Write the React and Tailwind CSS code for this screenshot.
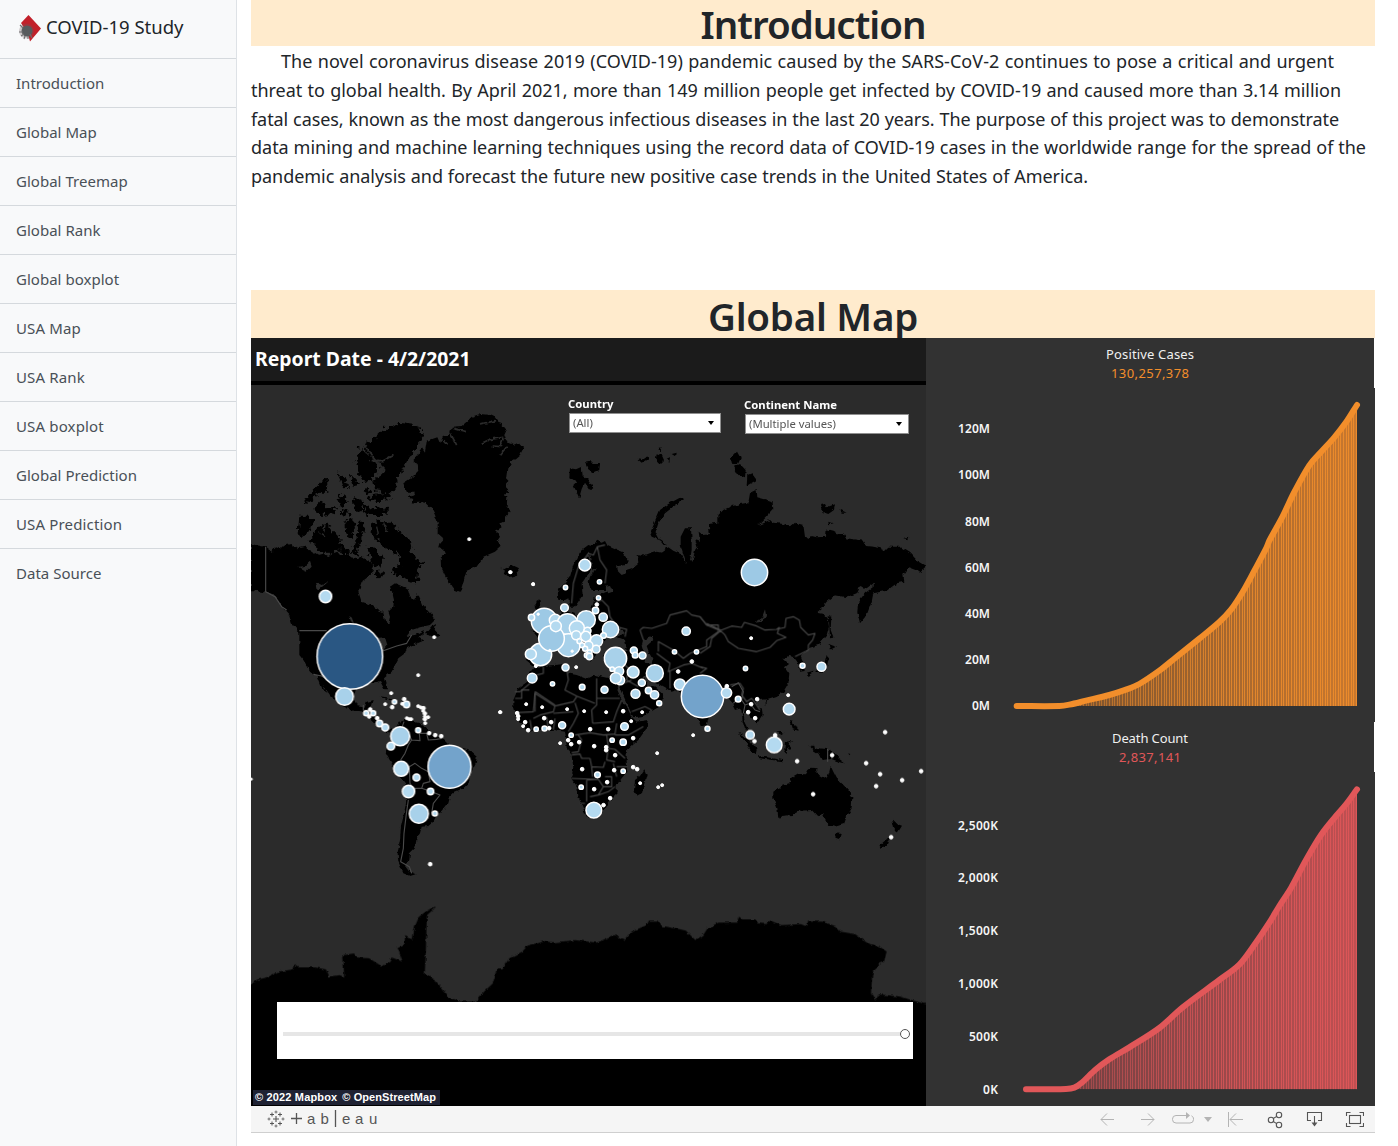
import React from "react";

const NAV = [
  "Introduction",
  "Global Map",
  "Global Treemap",
  "Global Rank",
  "Global boxplot",
  "USA Map",
  "USA Rank",
  "USA boxplot",
  "Global Prediction",
  "USA Prediction",
  "Data Source",
];

function Logo() {
  return (
    <svg className="h-7 w-6 shrink-0" viewBox="0 0 24 28">
      <path d="M10.500 1 L23 14.500 L12 27.500 L10 20 L3 9 Z" fill="#c2202a" />
      <circle cx="8.500" cy="17" r="7.500" fill="#6b5b5c" fillOpacity="0.3" />
      <circle cx="9" cy="17" r="5.500" fill="#575b5d" />
      <path
        d="M2 11l3 3M1 18h4M3 22l3-2M6 25l1-3M10 25v-3M14 24l-2-4"
        stroke="#6f6f70"
        strokeWidth="1.1"
        fill="none"
      />
    </svg>
  );
}

function Sidebar() {
  return (
    <aside className="flex w-[237px] shrink-0 flex-col border-r border-[#dee2e6] bg-[#f8f9fa]">
      <div className="flex h-[59px] items-center border-b border-[#d5d9dd] pb-[3px] pl-[18px]">
        <Logo />
        <span className="mb-px ml-1 text-[18.5px] whitespace-nowrap text-[#212529]">COVID-19 Study</span>
      </div>
      {NAV.map((label, i) => (
        <a
          key={label}
          className={
            "flex h-[49px] items-center pl-4 text-[15px] whitespace-nowrap text-[#495057] " +
            (i < NAV.length - 1 ? "border-b border-[#d5d9dd] " : "") +
            (label.startsWith("USA") ? "tracking-[0.15px]" : "tracking-[0.02px]")
          }
        >
          {label}
        </a>
      ))}
    </aside>
  );
}

/* ---------- map ---------- */

const AMERICAS = [
  // mainland North America down to Panama
  "3,432 20,436 45,440 65,455 78,442 90,446 100,437 125,432 128,440 140,437 143,445 165,440 175,450 190,455 205,465 220,461 235,468 250,460 262,455 270,465 290,465 305,472 320,475 335,470 350,480 368,492 362,505 372,515 355,530 335,545 325,575 335,605 365,615 385,630 400,636 405,665 415,672 420,650 415,635 430,620 432,600 426,575 420,560 435,550 460,560 475,570 480,588 492,600 503,580 515,605 520,618 545,645 555,660 540,675 510,682 485,690 470,708 495,705 525,690 520,702 505,712 520,722 490,735 470,745 465,760 445,775 435,795 425,815 402,835 411,868 403,868 390,843 360,850 320,860 310,895 320,915 345,920 350,905 368,900 362,920 352,932 368,932 375,955 385,970 400,982 415,990 425,985 440,990 436,1000 405,995 380,975 360,955 340,938 310,933 270,915 240,885 215,850 200,830 180,812 160,780 148,765 148,700 125,670 118,645 95,620 85,600 70,585 50,578 3,570",
  "198,825 212,838 222,865 233,882 222,875 212,862",
  // South America
  "440,982 455,960 470,955 490,965 510,970 525,982 545,1000 575,1010 590,1025 600,1035 630,1045 660,1052 680,1070 678,1090 665,1115 655,1150 640,1165 615,1175 600,1190 595,1210 575,1235 560,1245 550,1265 535,1278 515,1280 510,1300 500,1315 495,1345 480,1360 478,1380 465,1395 480,1415 497,1423 480,1428 460,1420 445,1385 443,1360 450,1320 453,1280 460,1250 468,1210 470,1170 465,1150 440,1120 425,1090 407,1060 410,1045 425,1020 440,1010",
  "528,702 548,678 558,672 554,690 572,708 548,712",
  "388,889 410,892 425,898 442,910 425,902",
  "750,500 762,508 785,496 803,504 806,514 795,527 778,532 758,520 765,512",
];
const ARCTIC = [
  "430,75 440,68 460,70 475,72 500,75 508,88 525,105 505,130 490,160 470,185 455,215 440,235 445,255 425,280 400,275 375,270 370,240 400,215 390,185 365,175 345,150 350,130 385,105 410,80",
  "330,145 350,160 375,190 380,215 360,245 340,240 325,215 317,190",
  "350,295 370,285 420,275 418,300 370,305",
  "340,315 370,325 410,320 410,345 350,345",
  "160,310 185,275 215,245 238,238 225,265 195,290 180,312",
  "190,325 215,300 225,320 245,325 262,320 250,340 215,345",
  "262,220 285,235 300,260 280,262",
  "298,225 322,250 310,265",
  "215,262 232,262 232,275 216,275",
  "262,295 285,280 290,310 270,315",
  "310,288 335,300 340,335 315,328",
  "270,330 300,335 295,345 270,342",
  "345,265 362,275 348,282",
  "148,350 180,350 195,365 175,395 160,412 143,400",
  "175,420 205,380 225,368 245,385 240,400 262,400 275,430 288,448 260,450 240,460 205,455 190,430",
  "283,365 312,358 315,390 300,412 285,395",
  "325,365 345,365 340,395 330,430 320,470 305,460 318,430",
  "365,370 390,362 430,370 445,390 480,420 485,450 500,480 520,490 505,510 500,550 475,545 450,525 425,518 430,505 455,495 440,465 415,445 385,430 375,410 360,395",
  "352,440 380,445 402,480 390,505 365,490",
  "380,510 405,525 385,535 370,525",
  "275,445 300,450 290,465 272,455",
];
const GREENLAND =
  "690,42 720,45 735,52 745,68 755,72 770,90 763,105 768,120 790,135 805,128 820,145 810,165 795,178 780,185 785,195 772,205 768,235 778,245 765,262 778,275 760,285 772,292 770,320 782,332 765,350 765,365 748,370 755,382 738,392 750,410 740,425 755,437 735,455 700,470 680,500 650,512 640,545 630,578 615,572 605,560 585,525 573,500 572,470 585,460 580,448 565,440 570,425 580,415 563,400 563,370 555,345 545,325 530,310 505,305 485,308 490,298 470,292 495,285 492,275 470,275 460,250 490,230 505,215 500,190 490,180 505,165 515,140 525,155 530,125 545,118 562,112 570,130 578,112 600,100 605,80 635,78 650,65 665,50";

const EURASIA = [
  "145,180 143,150 165,130 180,110 190,75 205,45 215,30 235,15 245,18 262,2 275,8 285,3 293,18 315,28 335,35 356,62 352,74 325,78 318,72 320,90 335,105 348,100 348,90 365,85 385,68 380,45 395,48 420,38 440,32 455,35 475,22 490,32 512,42 528,70 512,15 512,-10 525,-35 543,-35 545,0 545,30 540,60 548,65 555,30 562,20 556,0 570,5 566,-25 580,-15 600,-18 595,-48 625,-52 625,-75 640,-90 660,-100 690,-108 715,-112 720,-140 740,-150 742,-128 765,-122 788,-115 790,-92 770,-70 745,-45 780,-60 790,-52 820,-48 840,-38 855,-52 880,-45 885,-10 895,0 905,-12 920,-8 948,-10 950,-32 968,-28 980,-20 1000,-20 1010,-5 1030,-2 1060,2 1068,18 1090,20 1115,25 1120,35 1135,20 1170,20 1200,38 1220,60 1245,75 1235,102 1222,92 1195,82 1180,105 1183,125 1160,130 1130,152 1090,160 1085,185 1070,225 1050,250 1042,215 1045,185 1065,160 1090,140 1092,128 1070,145 1050,138 1040,160 1010,172 975,166 950,185 935,205 920,218 940,222 953,235 957,260 950,285 925,315 895,325 870,345 880,370 882,385 872,388 862,365 850,350 835,348 815,358 840,370 825,382 838,400 835,430 820,455 800,468 770,478 750,480 735,490 755,505 758,525 740,552 728,535 712,515 700,520 705,550 715,570 705,568 698,545 694,505 675,510 660,480 640,465 600,520 590,555 578,558 568,535 520,480 508,448 485,455 460,440 440,430 420,405 400,410 412,435 440,445 460,465 455,485 440,505 400,528 370,532 355,500 335,455 325,430 335,400 330,380 290,375 275,350 290,335 330,330 350,330 320,290 345,280 330,262 300,290 275,310 265,335 245,362 230,350 210,320 185,310 200,345 180,352 160,310 125,320 125,350 95,375 70,378 48,360 50,330 85,325 90,300 65,270 100,262 130,245 150,225 155,195 165,190 175,215 200,225 240,215 250,190 255,170 290,155 300,150 245,150 235,130 240,110 258,85 240,95 215,130 218,165 195,200 180,200 175,175 165,180",
  "75,185 88,178 92,205 112,235 105,262 70,262 82,225",
];
// islands of the Arctic Ocean
const ISLES = [
  "180,235 198,238 215,230 218,258 232,268 250,295 240,300 225,278 215,300 208,325 190,285 200,275 178,262",
  "225,215 240,212 248,222 270,222 268,240 250,248 235,238",
  "515,320 522,328 490,350 465,370 445,400 437,425 450,450 425,440 420,430 435,395 450,360 475,342",
  "447,448 462,458 470,468 460,464",
  "660,205 680,183 692,205 685,220 662,218",
  "672,230 690,222 707,240 705,262 685,255",
  "712,255 725,250 740,270 710,287",
  "930,345 945,342 950,352 975,343 972,360 955,372 938,366",
  "988,358 1010,368 995,368",
  "955,395 968,400 956,403",
  "1180,445 1198,440 1195,448",
  "383,205 398,208 412,196 415,208 398,218",
  "440,190 455,195 462,210 450,222 438,208",
  "468,205 480,202 478,216",
  "485,192 500,188 498,200",
  "445,178 455,175 452,184",
];
const AFRICA = [
  "70,60 85,25 112,5 120,-20 135,-38 160,-42 225,-48 235,-45 232,-20 260,-15 290,-3 315,-15 360,-5 385,5 380,25 395,60 415,90 425,110 440,125 473,120 470,145 445,180 410,212 410,240 412,275 395,295 380,315 380,340 360,360 345,385 325,405 290,410 275,375 265,350 262,320 243,295 250,265 245,225 230,205 228,175 225,155 195,150 150,150 115,155 90,130 75,105 70,85",
  "435,300 450,288 463,268 470,285 455,340 440,347 432,330",
  "622,112 645,112 645,130 632,138",
];
const OCEANIA = [
  "250,335 275,318 300,310 305,292 325,280 345,283 352,270 362,263 383,265 378,280 410,298 418,275 422,258 430,275 440,295 455,310 475,330 487,350 485,385 470,410 462,432 435,440 415,435 403,412 398,400 385,412 365,390 330,392 305,405 275,408 265,414 262,385 250,355",
  "437,460 455,462 450,478 440,475",
  "606,416 622,432 636,437 622,460 612,445",
  "602,465 590,495 575,503 568,497 590,478",
  "358,197 370,197 372,208 385,205 410,207 435,220 445,235 467,251 440,243 425,237 395,240 385,220 370,210",
  "145,158 165,170 190,195 203,210 200,223 185,215 165,185",
  "205,228 240,233 282,241 278,244 240,239 205,234",
  "258,155 272,152 283,158 275,165",
  "285,185 310,184 296,192 302,210 296,208 292,200 290,220 283,210",
  "300,120 308,122 310,135 322,140 322,152 308,148",
  "225,60 232,62 228,76",
  "475,220 481,222 478,226",
];
const JAPAN = [
  "386,228 394,232 392,270 400,290 390,292",
  "386,312 408,320 390,330",
  "380,345 386,358 380,385 365,398 345,398 350,388 372,378",
  "320,398 340,392 338,400 322,408",
  "295,362 312,372 314,390 300,392",
];
const ANTARCTICA =
  "2,370 20,358 40,352 65,335 100,328 103,312 112,322 150,322 175,328 182,350 205,345 217,350 215,285 240,280 245,292 275,295 305,320 322,305 326,292 352,305 340,262 356,250 358,225 375,238 380,200 390,170 410,150 428,142 408,165 405,290 403,342 430,365 460,412 485,425 520,425 540,395 560,370 570,325 582,325 598,295 628,275 640,257 680,243 700,247 750,240 800,248 822,235 840,225 862,240 880,215 915,195 920,182 942,182 950,198 985,206 1005,212 1027,240 1045,225 1055,205 1080,188 1122,188 1128,170 1135,178 1165,178 1172,190 1190,192 1200,182 1225,195 1270,192 1282,198 1285,185 1320,185 1350,198 1362,215 1395,222 1430,252 1450,258 1468,275 1462,305 1448,312 1435,345 1432,400 1442,422 1450,403 1500,410 1520,418 1558,432 1570,434 1570,570 -10,570 -10,372";

// [x, y, r] on the sheet of each region
const DOTS_W = [
  [226, 589, 19], [299, 769, 99], [657, 417, 5], [780, 516, 5], [849, 552, 5], [552, 711, 5],
  [283, 889, 27], [504, 825, 5], [423, 879, 5], [405, 912, 5], [433, 905, 7], [426, 921, 6], [462, 897, 6], [456, 911, 5], [469, 913, 10],
  [348, 939, 8], [360, 928, 6], [369, 939, 8], [357, 949, 6], [381, 954, 6], [388, 970, 10], [405, 982, 11],
  [504, 918, 5], [512, 922, 5], [520, 924, 6], [519, 932, 5], [524, 940, 6], [524, 949, 5], [534, 951, 5], [524, 957, 6], [525, 969, 5],
  [470, 954, 5], [477, 957, 5], [483, 957, 5], [504, 990, 8], [537, 999, 6], [555, 1005, 6], [573, 1008, 6],
  [450, 1008, 29], [422, 1038, 12], [598, 1100, 65], [453, 1106, 23], [499, 1132, 11], [475, 1174, 19], [541, 1174, 10], [506, 1241, 29], [554, 1240, 8], [540, 1392, 6], [750, 936, 5], [3, 1137, 4],
];
const DOTS_E = [
  [224, 75, 18], [166, 142, 7], [268, 125, 7], [69, 132, 5], [1, 96, 5], [733, 97, 40],
  [102, 243, 39], [64, 232, 10], [84, 222, 4], [163, 203, 12], [265, 173, 7], [260, 193, 6], [256, 211, 10], [279, 231, 13], [135, 240, 18],
  [228, 239, 28], [172, 252, 32], [175, 315, 35], [91, 343, 34], [124, 295, 39], [137, 258, 17], [200, 264, 23], [62, 342, 17], [119, 331, 4], [186, 333, 4],
  [232, 272, 11], [198, 285, 14], [227, 289, 16], [208, 303, 8], [301, 268, 25], [280, 286, 9], [259, 302, 19], [235, 317, 14], [216, 315, 8], [225, 326, 8], [258, 327, 12], [238, 337, 8], [230, 345, 8], [238, 349, 10],
  [77, 378, 5], [166, 382, 11], [198, 381, 5], [66, 414, 15], [127, 431, 7], [216, 441, 9], [283, 449, 11],
  [316, 355, 34], [306, 387, 7], [327, 393, 14], [371, 331, 11], [375, 345, 9], [397, 346, 11], [330, 420, 14], [317, 414, 17], [369, 396, 18], [434, 399, 26], [395, 428, 11], [415, 451, 10], [433, 464, 13], [376, 461, 14], [447, 489, 8],
  [528, 273, 13], [493, 335, 7], [559, 335, 7], [545, 364, 6], [504, 394, 6], [509, 433, 17], [577, 469, 64], [723, 294, 5], [706, 385, 7],
  [650, 438, 6], [649, 458, 16], [684, 477, 9], [741, 477, 6], [723, 492, 6], [714, 516, 6], [735, 534, 6], [834, 465, 5], [837, 507, 18], [877, 377, 8], [934, 380, 14],
];
const DOTS_S = [
  [30, 96, 5], [108, 72, 5], [156, 81, 5], [231, 87, 5], [282, 93, 5], [348, 96, 5], [399, 93, 6], [456, 96, 5], [423, 123, 5],
  [81, 99, 6], [84, 108, 6], [84, 117, 5], [105, 126, 6], [99, 138, 5], [114, 150, 6], [138, 147, 7], [162, 114, 6], [163, 145, 8], [177, 144, 6], [183, 126, 6],
  [216, 135, 11], [300, 147, 6], [354, 147, 6], [403, 139, 12], [429, 174, 6], [399, 186, 10], [366, 180, 7], [348, 201, 6], [348, 210, 6], [375, 225, 6],
  [243, 165, 7], [234, 180, 6], [243, 192, 6], [210, 189, 5], [267, 186, 6], [312, 198, 6], [276, 267, 6], [322, 284, 9], [372, 270, 6], [399, 273, 7], [429, 261, 6], [441, 267, 6],
  [351, 306, 6], [273, 321, 7], [312, 327, 6], [360, 354, 6], [340, 375, 6], [311, 390, 24], [450, 309, 5], [501, 219, 5], [504, 321, 5], [516, 315, 5], [609, 165, 5], [652, 146, 8],
];
const DOTS_O = [
  [180, 164, 13], [193, 183, 6], [255, 165, 6], [252, 194, 24], [321, 243, 6], [426, 225, 6], [369, 342, 6], [585, 156, 6], [528, 249, 6],
  [570, 282, 6], [558, 318, 6], [636, 300, 6], [693, 273, 6], [603, 471, 6],
];

function shade(r) {
  if (r > 90) return "#2a5783";
  if (r > 60) return "#73a3cb";
  if (r > 37) return "#9dc9e5";
  if (r > 24) return "#a8d1ea";
  return r < 7 ? "#ffffff" : "#b4daf0";
}

function Dots({ items }) {
  return items.map(([x, y, r], i) => (
    <circle key={i} cx={x + 0.5} cy={y + 0.5} r={r - 0.5} fill={shade(r)} stroke="#fff" strokeWidth={r < 7 ? 3 : 4.5} />
  ));
}
function Land({ shapes }) {
  return shapes.map((p, i) => <polygon key={i} points={p} fill="#000" />);
}
function Borders({ d }) {
  return <path d={d} fill="none" stroke="#4a4a4a" strokeWidth="3.4" strokeLinejoin="round" />;
}
function Water({ d, w = 0 }) {
  return <path d={d} fill={w ? "none" : "#2b2b2b"} stroke={w ? "#2b2b2b" : "none"} strokeWidth={w} />;
}

const WEST = "translate(250 400) scale(0.33333)";
const EAST = "translate(510 540) scale(0.33333)";
const NORTH = "translate(510 390) scale(0.33333)";
const SOUTH = "translate(490 680) scale(0.33333)";
const OCEAN = "translate(690 680) scale(0.33333)";
const FAREAST = "translate(700 540) scale(0.33333)";

function WorldMap() {
  return (
    <svg className="block h-[721px] w-[675px] bg-[#2b2b2b]" viewBox="251 385 675 721">
      <defs>
        <filter id="coast" x="-2%" y="-2%" width="104%" height="104%" colorInterpolationFilters="sRGB">
          <feTurbulence type="fractalNoise" baseFrequency="0.2" numOctaves="2" seed="4" />
          <feDisplacementMap in="SourceGraphic" scale="4" xChannelSelector="R" yChannelSelector="G" />
        </filter>
        <filter id="fjord" x="-2%" y="-2%" width="104%" height="104%" colorInterpolationFilters="sRGB">
          <feTurbulence type="fractalNoise" baseFrequency="0.22" numOctaves="2" seed="9" />
          <feDisplacementMap in="SourceGraphic" scale="10" xChannelSelector="R" yChannelSelector="G" />
        </filter>
      </defs>
      <g filter="url(#fjord)">
        <g transform={WEST}><Land shapes={ARCTIC} /></g>
      </g>
      <g filter="url(#coast)">
        <g transform={WEST}>
          <Land shapes={AMERICAS} />
          <Land shapes={[GREENLAND]} />
          <Water w={5} d="M365,182 L400,182 430,165M385,190 L405,210M340,130 L375,180M610,85 L648,95M600,98 L620,135M695,130 L720,118 760,112M760,115 L750,140 728,138M770,140 L750,165M690,72 L735,62M580,120 L590,130" />
          <Water w={4} d="M440,455 L452,475 M205,395 L225,410 M225,375 L220,400 M380,380 L385,405 M400,365 L410,395" />
          <Water d="M145,500 L165,498 180,485 185,500 170,515 158,510Z M195,545 L215,555 238,545 215,565 200,570Z M298,645 L306,650 312,672 302,662Z M370,715 L405,712 412,735 400,750 390,730Z" />
        </g>
        <g transform={NORTH}><Land shapes={ISLES} /></g>
        <g transform={EAST}>
          <Land shapes={EURASIA} />
          <Water d="M400,300 L425,290 430,300 410,318 418,340 428,358 425,372 408,368 402,345 395,320Z M290,290 L320,290 345,300 350,325 300,335 280,330Z M735,248 L755,235 765,208 768,225 755,245Z M285,140 L300,138 308,155 295,160Z" />
          <Water w={4} d="M215,75 L235,40 250,100" />
        </g>
        <g transform={SOUTH}><Land shapes={AFRICA} /></g>
        <g transform={OCEAN}><Land shapes={OCEANIA} /></g>
        <g transform={FAREAST}><Land shapes={JAPAN} /></g>
        <g transform="translate(250 860) scale(0.43367 0.33333)"><Land shapes={[ANTARCTICA]} /></g>
      </g>
      <rect x="251" y="1005" width="675" height="101" fill="#000" />
      <g transform={WEST}>
        <Borders d="M47,440V575L75,590 95,620 110,630 M148,692H230 M400,752L440,738 470,730 485,705 M190,823L215,828 250,850 M340,915V930L360,932" />
        <Borders d="M462,965L455,985 475,1000 485,1020 475,1035 465,1060 452,1080 M485,1020L510,1022 508,1000 530,1000 M530,1000L535,1020 560,1018 575,1015 M478,1100L495,1090 515,1105 535,1115 540,1145 520,1150 515,1165 545,1175 570,1185 550,1210 545,1240 M478,1100L480,1150 490,1165 515,1165 M475,1200L468,1250 462,1300 460,1345 452,1385 478,1400 485,1420" />
      </g>
      <g transform={EAST}>
        <Borders d="M185,190L190,130 205,80 235,40 250,45 262,20 285,15 M262,20L270,60 290,90 285,130 M258,185L275,180 295,200 300,230 320,260 350,268 345,290" />
        <Borders d="M390,270L400,262 425,265 470,250 480,225 530,212 545,225 570,230 590,255 625,255 625,275 590,300 590,320 540,340 520,355 490,330 445,305 445,335M390,270L400,300M440,340L480,370 475,395 520,375 545,370 580,385M480,395V445M340,370L355,385 350,420 385,440M340,430L365,420M365,515L405,500 425,510" />
        <Borders d="M570,230L590,255 630,272 665,258 695,262 703,247 740,258 765,270 800,268 808,262 802,280 828,292 800,302 780,322 740,335 685,325 655,305 645,285 632,272 605,295 600,320 570,340 M800,268L825,262 828,235 850,230 868,240 872,262 895,285 915,280 908,300 895,315 895,330 855,350 M632,270L590,250 M570,380L590,385 570,400 M660,435L690,430 700,445 695,465 710,485 725,475 740,495 750,510" />
        <Borders d="M80,405L100,400 100,380M15,455H30L60,430M75,455V515M75,455L135,495 M170,385L175,420 165,450 200,468 255,490 M260,415V475H330 M200,470L190,485 135,498" />
      </g>
      <g transform={SOUTH}>
        <Borders d="M75,55H95V30H118 M135,40L130,95 75,98 M135,40L195,78 190,95 150,105 130,115 M255,68L265,100 250,130 M320,55V75L305,90 308,130 M190,100L250,95 M395,60L380,95 370,125 308,130 M170,110L175,150 M120,120L125,150 M195,115L190,150 M250,130L235,155 M255,165L300,158 340,165 375,162 380,130 M265,165L275,180 265,215 245,218 M350,165L355,200 350,240 375,245 M300,235L305,260 340,262 345,245 M245,225L270,222 275,235 300,235 M243,295L320,298 M375,165L415,165 460,140 M355,205L375,208 405,235 M380,260H412 M370,250L380,290 M305,262L308,290 M290,300V365 M290,300L325,298 340,320 365,320 365,290 345,290 M340,320L325,345 300,350 M325,345L355,335 375,320 M270,370H285" />
      </g>
      <g transform={OCEAN}>
        <Borders d="M413,207V245M125,20L145,8 160,35 155,60 165,75 180,70 195,90 210,95 M165,75L160,100 M130,70L140,60" />
      </g>
      <g transform={WEST}><Dots items={DOTS_W} /></g>
      <g transform={EAST}><Dots items={DOTS_E} /></g>
      <g transform={SOUTH}><Dots items={DOTS_S} /></g>
      <g transform={OCEAN}><Dots items={DOTS_O} /></g>
    </svg>
  );
}

function Select({ label, value, className }) {
  return (
    <div className={className}>
      <div className="text-[11.3px] leading-[16px] font-bold whitespace-nowrap text-white">{label}</div>
      <div className="mt-px ml-px flex h-5 items-center justify-between border border-[#8f8f8f] bg-white pr-1.5 pl-[3px] text-[11.3px] text-[#555]">
        <span>{value}</span>
        <span className="h-0 w-0 border-x-[3px] border-t-4 border-x-transparent border-t-black" />
      </div>
    </div>
  );
}

/* ---------- charts ---------- */

const CASES = [[272, 1104], [400, 1104], [430, 1100], [480, 1088], [550, 1071], [600, 1055], [640, 1038], [700, 998], [750, 958], [820, 902], [880, 852], [915, 815], [950, 762], [985, 698], [1022, 628], [1030, 608], [1070, 535], [1105, 462], [1150, 382], [1185, 342], [1225, 298], [1260, 253], [1293, 201]];
const DEATHS = [[300, 1108], [420, 1107], [445, 1103], [465, 1090], [510, 1048], [550, 1018], [610, 982], [700, 924], [770, 862], [880, 780], [940, 734], [980, 682], [1030, 608], [1060, 558], [1095, 504], [1140, 420], [1185, 345], [1230, 288], [1260, 253], [1293, 208]];

// smooth path through the points
function curve(pts) {
  let d = "";
  for (let i = 0; i < pts.length - 1; i++) {
    const a = pts[Math.max(i - 1, 0)];
    const b = pts[i];
    const c = pts[i + 1];
    const e = pts[Math.min(i + 2, pts.length - 1)];
    const span = c[0] - b[0];
    const m1 = i === 0 ? 0 : (c[1] - a[1]) / (c[0] - a[0]);
    const m2 = (e[1] - b[1]) / (e[0] - b[0]);
    d += `C${b[0] + span / 3},${b[1] + (m1 * span) / 3} ${c[0] - span / 3},${c[1] - (m2 * span) / 3} ${c[0]},${c[1]}`;
  }
  return d;
}

function AreaChart({ id, title, total, points, color, dim, mid, ticks, right, className }) {
  const pts = points.map(([x, y]) => [x / 3, y / 3]);
  const base = pts[0][1];
  const left = pts[0][0];
  const end = pts[pts.length - 1][0];
  const line = curve(pts);
  const bars = [];
  for (let i = 0; end - i * 2.6 > left; i++) bars.push(Math.round(end - i * 2.6));
  return (
    <svg className={className} viewBox="0 0 449 384" fontFamily="'Noto Sans', sans-serif">
      <defs>
        <linearGradient id={id + "-fill"} x1="0" x2="1">
          <stop offset="0.1" stopColor={dim} />
          <stop offset="1" stopColor={mid} />
        </linearGradient>
        <linearGradient id={id + "-bar"} x1="0" x2="1" gradientUnits="userSpaceOnUse" gradientTransform={`translate(${left} 0) scale(${end - left} 1)`}>
          <stop offset="0.1" stopColor={color} stopOpacity="0.35" />
          <stop offset="0.65" stopColor={color} stopOpacity="0.75" />
          <stop offset="1" stopColor={color} stopOpacity="0.85" />
        </linearGradient>
        <clipPath id={id + "-clip"}>
          <path d={`M${left},${base}${line}V${base}Z`} />
        </clipPath>
      </defs>
      <rect x="448" y="0" width="1" height="50" fill="#fff" />
      <text x="224" y="21" textAnchor="middle" fontSize="13" fill="#f0f0f0" textLength={title.w}>{title.t}</text>
      <text x="224" y="40" textAnchor="middle" fontSize="13" fill={color} textLength={total.w}>{total.t}</text>
      {ticks.map(([t, y, w]) => (
        <text key={t} x={right} y={y + 4.3} textAnchor="end" fontSize="12" fontWeight="600" fill="#f5f5f5" textLength={w}>{t}</text>
      ))}
      <g clipPath={`url(#${id}-clip)`}>
        <rect x={left} y="50" width={end - left} height={base - 50} fill={`url(#${id}-fill)`} />
        {bars.map((x) => (
          <rect key={x} x={x - 1} y="50" width="1" height={base - 50} fill={`url(#${id}-bar)`} />
        ))}
      </g>
      <path d={`M${left},${base}${line}`} fill="none" stroke={color} strokeWidth="6" strokeLinecap="round" strokeLinejoin="round" />
    </svg>
  );
}

/* ---------- toolbar ---------- */

function Toolbar() {
  return (
    <div className="flex h-[27px] items-center justify-between border-b border-[#cfcfcf] bg-[#f5f5f5] pr-[11px] pl-4">
      <div className="flex items-center text-[#555]">
        <svg className="h-[18px] w-[18px]" viewBox="0 0 18 18" fill="none" stroke="currentColor">
          <path d="M9 6v6M6 9h6" strokeWidth="1.1" />
          <path d="M5 2.500v4M3 4.500h4M13 2.500v4M11 4.500h4M5 11.500v4M3 13.500h4M13 11.500v4M11 13.500h4" strokeWidth="1" />
          <path d="M9 .5v3M7.500 2h3M9 14.500v3M7.500 16h3M2 7.500v3M.5 9h3M16 7.500v3M14.500 9h3" strokeWidth="0.8" />
        </svg>
        <svg className="ml-1 h-5 w-[92px]" viewBox="0 0 92 20" fontFamily="'Liberation Sans', sans-serif">
          <path d="M2 9.500h11M7.500 4v11M46.500 1v17" stroke="#555" strokeWidth="1.3" />
          <g fill="#555" fontSize="15">
            {[["a", 18], ["b", 31.5], ["e", 53], ["a", 66], ["u", 80]].map(([c, x]) => (
              <text key={x} x={x} y="15">{c}</text>
            ))}
          </g>
        </svg>
      </div>
      <svg className="h-5 w-[266px]" viewBox="1098 1109 266 20" fill="none" stroke="#b4b4b4">
        <path d="M1114 1119.500h-13M1107 1113.500l-6 6 6 6M1141 1119.500h13M1148 1113.500l6 6-6 6" />
        <path d="M1186 1115.500h-10a3.500 3.500 0 0 0-3.500 3.500v.5a3.500 3.500 0 0 0 3.500 3.500h14a3.500 3.500 0 0 0 3.500-3.500v-.5c0-1.500-.7-2.500-2-3.200" />
        <path d="M1182 1115.500h7" />
        <path d="M1186 1112l4 3.500-4 3.500zM1204 1117h8l-4 5z" fill="#b4b4b4" stroke="none" />
        <path d="M1228.500 1112v15M1243 1119.500h-13M1236 1113.500l-6 6 6 6" />
        <g stroke="#555" strokeWidth="1.1">
          <circle cx="1271" cy="1120" r="2.700" />
          <circle cx="1279" cy="1115" r="2.700" />
          <circle cx="1279" cy="1125" r="2.700" />
          <path d="M1273.300 1118.500l3.400-2.100M1273.300 1121.500l3.400 2.100" />
          <path d="M1311 1120.500h-3.500v-8h14v8h-3.500M1314.500 1116v8" />
          <path d="M1311.500 1122.500h6l-3 4z" fill="#555" stroke="none" />
          <rect x="1349.500" y="1115.500" width="11" height="8" />
          <path d="M1346.500 1116v-3.500h4M1359.500 1112.500h4v3.500M1346.500 1123v3.500h4M1359.500 1126.500h4v-3.500" />
        </g>
      </svg>
    </div>
  );
}

function Dashboard() {
  return (
    <div className="w-[1124px]">
      <div className="flex h-[768px] bg-[#323232]">
        <div className="relative w-[675px]">
          <div className="flex h-[47px] items-center border-b-4 border-black bg-[#1b1b1b] pb-0.5 pl-1 text-[19.4px] font-bold whitespace-nowrap text-white">
            Report Date - 4/2/2021
          </div>
          <WorldMap />
          <Select label="Country" value="(All)" className="absolute top-[58px] left-[317px] w-[153px]" />
          <Select label="Continent Name" value="(Multiple values)" className="absolute top-[59px] left-[493px] w-[165px]" />
          <div className="absolute top-[664px] left-[26px] flex h-[57px] w-[636px] items-center bg-white pt-[6px] pr-[3px] pl-1.5">
            <div className="h-1 flex-1 bg-[#e6e6e6]" />
            <div className="h-[10px] w-[10px] rounded-full border border-[#555] bg-white" />
          </div>
          <div className="absolute top-[752px] left-[2px] flex h-[15px] w-[187px] items-center gap-[5px] bg-[#1f2233] pl-0.5 font-['Liberation_Sans',sans-serif] text-[11px] font-bold tracking-[0.16px] whitespace-nowrap text-white">
            <span>© 2022 Mapbox</span>
            <span className="tracking-[0.08px]">© OpenStreetMap</span>
          </div>
        </div>
        <div className="flex w-[449px] flex-col">
          <AreaChart
            id="cases"
            className="block h-[384px] w-[449px]"
            title={{ t: "Positive Cases", w: 88 }}
            total={{ t: "130,257,378", w: 78 }}
            points={CASES}
            color="#f28e2b"
            dim="#75502f"
            mid="#c9782e"
            right={64}
            ticks={[["120M", 91, 32], ["100M", 137, 32], ["80M", 184, 25], ["60M", 230, 25], ["40M", 276, 25], ["20M", 322, 25], ["0M", 368, 18]]}
          />
          <AreaChart
            id="deaths"
            className="block h-[384px] w-[449px]"
            title={{ t: "Death Count", w: 76 }}
            total={{ t: "2,837,141", w: 62 }}
            points={DEATHS.map(([x, y]) => [x, y - 6])}
            color="#e15759"
            dim="#6e4041"
            mid="#c05052"
            right={72}
            ticks={[["2,500K", 104, 40], ["2,000K", 156, 40], ["1,500K", 209, 40], ["1,000K", 262, 40], ["500K", 315, 29], ["0K", 368, 15]]}
          />
        </div>
      </div>
      <Toolbar />
    </div>
  );
}

const LINES = [
  "The novel coronavirus disease 2019 (COVID-19) pandemic caused by the SARS-CoV-2 continues to pose a critical and urgent",
  "threat to global health. By April 2021, more than 149 million people get infected by COVID-19 and caused more than 3.14 million",
  "fatal cases, known as the most dangerous infectious diseases in the last 20 years. The purpose of this project was to demonstrate",
  "data mining and machine learning techniques using the record data of COVID-19 cases in the worldwide range for the spread of the",
  "pandemic analysis and forecast the future new positive case trends in the United States of America.",
];
const WIDTHS = ["ml-[30px] w-[1053px] tracking-[0.06px]", "w-[1090px] tracking-[-0.05px]", "w-[1088px] tracking-[-0.08px]", "w-[1115px] tracking-[-0.02px]", "w-[837px] tracking-[-0.05px]"];

export default function App() {
  return (
    <div className="flex h-[1146px] w-[1398px] overflow-hidden bg-white font-['Noto_Sans',sans-serif] text-[#212529]">
      <Sidebar />
      <main className="ml-[14px] flex w-[1124px] flex-col">
        <h1 className="flex h-[46px] items-center justify-center bg-[#ffebcd] pt-0.5 text-[38.5px] leading-[44px] font-semibold tracking-[-1px]">
          Introduction
        </h1>
        <p className="h-[244px] pt-px text-[18px] leading-[28.8px]">
          {LINES.map((line, i) => (
            <span key={i} className={"block whitespace-nowrap [text-align-last:justify] " + WIDTHS[i]}>
              {line}
            </span>
          ))}
        </p>
        <h1 className="flex h-12 items-center justify-center bg-[#ffebcd] pt-[3px] text-[38.5px] leading-[44px] font-semibold tracking-[-0.25px]">
          Global Map
        </h1>
        <Dashboard />
      </main>
    </div>
  );
}
